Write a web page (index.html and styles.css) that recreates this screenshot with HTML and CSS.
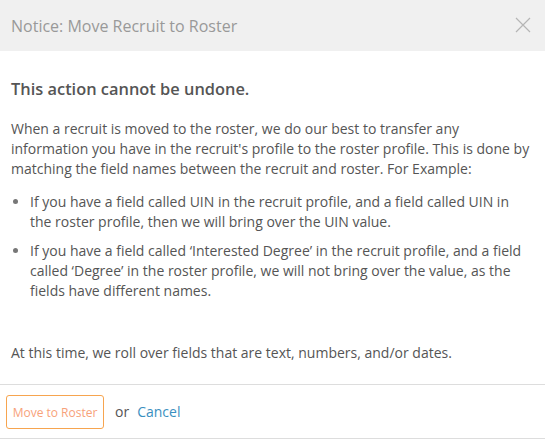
FILE: index.html
```html
<!DOCTYPE html>
<html>
<head>
<meta charset="utf-8">
<link rel="stylesheet" href="styles.css">
</head>
<body>
<div class="modal">
  <div class="modal-header">
    <span class="title">Notice: Move Recruit to Roster</span>
    <svg class="close" width="16" height="16" viewBox="0 0 16 16"><path d="M1 1 L15 15 M15 1 L1 15" stroke="#b5b5b5" stroke-width="1.2" fill="none"/></svg>
  </div>
  <div class="modal-body">
    <h2 class="heading">This action cannot be undone.</h2>
    <p class="text">When a recruit is moved to the roster, we do our best to transfer any information you have in the recruit's profile to the roster profile. This is done by matching the field names between the recruit and roster. For Example:</p>
    <ul class="list">
      <li>If you have a field called UIN in the recruit profile, and a field called UIN in the roster profile, then we will bring over the UIN value.</li>
      <li>If you have a field called ‘Interested Degree’ in the recruit profile, and a field called ‘Degree’ in the roster profile, we will not bring over the value, as the fields have different names.</li>
    </ul>
    <p class="text last">At this time, we roll over fields that are text, numbers, and/or dates.</p>
  </div>
  <div class="modal-footer">
    <button class="btn">Move to Roster</button>
    <span class="or">or</span>
    <a class="cancel">Cancel</a>
  </div>
</div>
</body>
</html>
```
FILE: styles.css
```css
html, body {
  margin: 0;
  padding: 0;
  background: #fff;
}
body {
  font-family: "Open Sans", sans-serif;
  color: #555;
}
.modal {
  width: 545px;
  height: 440px;
  display: flex;
  flex-direction: column;
}
.modal-header {
  height: 51px;
  background: #f0f0f0;
  display: flex;
  align-items: center;
  justify-content: space-between;
  padding: 0 14px 0 11px;
  box-sizing: border-box;
}
.title {
  font-size: 16px;
  color: #999;
}
.close {
  display: block;
  margin-top: -2px;
}
.modal-body {
  padding: 26px 11px 0 11px;
  height: 333px;
  box-sizing: border-box;
}
.heading {
  margin: 0 0 18px 0;
  font-size: 16.4px;
  font-weight: 600;
  color: #555;
  line-height: 24px;
}
.text {
  margin: 0;
  font-size: 14px;
  line-height: 20px;
}
.list {
  margin: 13px 0 0 0;
  padding: 0 0 0 19px;
  font-size: 14px;
  line-height: 20px;
}
.list li {
  margin-bottom: 9px;
}
.list li::marker {
  color: #777;
}
.text.last {
  margin-top: 42px;
}
.modal-footer {
  border-top: 1px solid #ddd;
  border-bottom: 1px solid #ddd;
  height: 55px;
  box-sizing: border-box;
  display: flex;
  align-items: center;
  padding: 0 6px;
}
.btn {
  font-family: "Open Sans", sans-serif;
  font-size: 12px;
  color: #f7a27a;
  background: #fff;
  border: 1px solid #f7a54f;
  border-radius: 3px;
  height: 34px;
  width: 98px;
  padding: 0;
  margin-top: 1px;
}
.or {
  font-size: 14px;
  color: #555;
  margin-left: 11px;
}
.cancel {
  font-size: 14px;
  color: #3a8fc0;
  margin-left: 8px;
}
```
